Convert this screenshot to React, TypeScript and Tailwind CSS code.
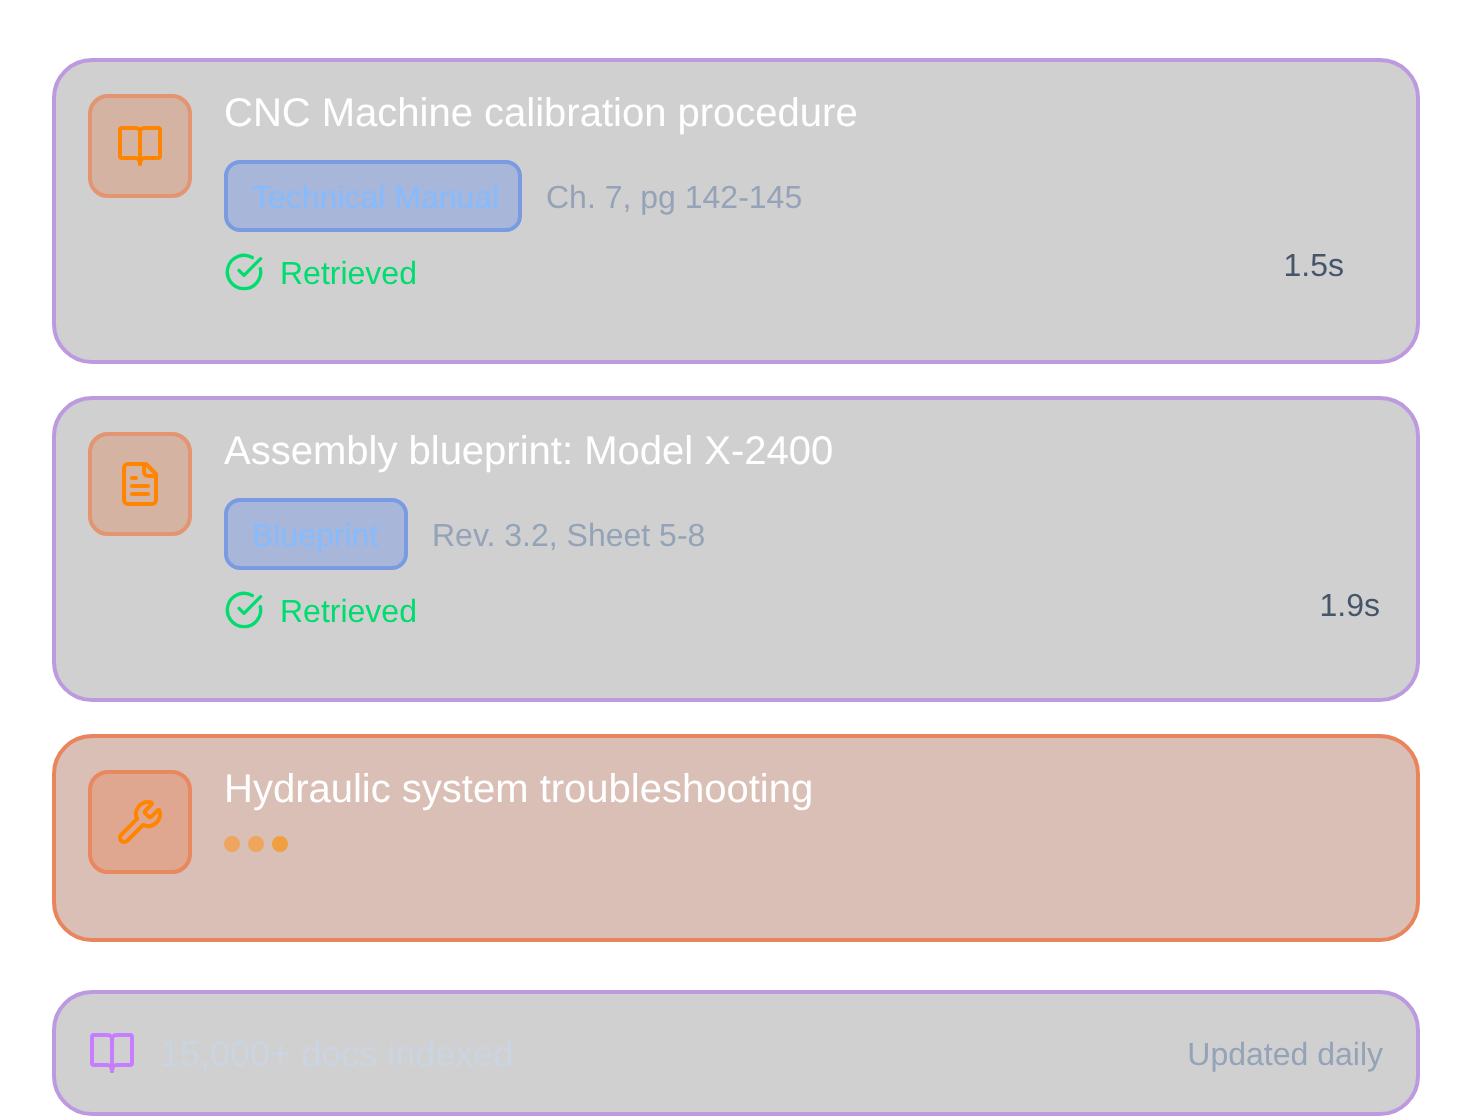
import { CircleCheckBig, Wrench } from "lucide-react";
import type { ReactNode } from "react";

function Svg({ children, className }: { children: ReactNode; className?: string }) {
  return (
    <svg width="48" height="48" viewBox="0 0 24 24" fill="none" stroke="currentColor" strokeWidth="2" strokeLinecap="round" strokeLinejoin="round" className={className}>
      {children}
    </svg>
  );
}

const Book = ({ className }: { className?: string }) => (
  <Svg className={className}>
    <path d="M12 5v16" />
    <path d="M3 18h7a2 3 0 0 1 2 3 2 3 0 0 1 2-3h7a1 1 0 0 0 1-1V4a1 1 0 0 0-1-1h-7a2 2 0 0 0-2 2 2 2 0 0 0-2-2H3a1 1 0 0 0-1 1v13a1 1 0 0 0 1 1z" />
  </Svg>
);

const File = () => (
  <Svg>
    <path d="M15 2H6a2 2 0 0 0-2 2v16a2 2 0 0 0 2 2h12a2 2 0 0 0 2-2V7Z" />
    <path d="M14 2v4a2 2 0 0 0 2 2h4" />
    <path d="M10 9H8" />
    <path d="M16 13H8" />
    <path d="M16 17H8" />
  </Svg>
);

function Retrieved() {
  return (
    <div className="flex h-12 items-center gap-4 text-[32px] text-[#00dc6e]">
      <CircleCheckBig size={40} strokeWidth={2} />
      <span className="pt-[2px] leading-[46px]">Retrieved</span>
    </div>
  );
}

function DocCard({ icon, title, chip, chipClass, sub, time, timeClass }: { icon: ReactNode; title: string; chip: string; chipClass: string; sub: string; time: string; timeClass: string }) {
  return (
    <div className="flex gap-8 rounded-[40px] border-4 border-[#bd9adf] bg-[#d0d0d0] pt-8 pb-16 px-8 will-change-transform">
      <div className="flex h-[104px] w-[104px] shrink-0 items-center justify-center rounded-[20px] border-4 border-[#e39572] bg-[#d5b3a3] text-[#ff8500]">
        {icon}
      </div>
      <div className="min-w-0 flex-1">
        <div className="mb-[28px] text-[40px] leading-[38px] text-white">{title}</div>
        <div className="flex items-center gap-6">
          <span className={`rounded-[16px] border-4 border-[#7a9ae2] bg-[#a7b6d9] pl-6 pt-[9px] pb-[7px] whitespace-nowrap text-[32px] leading-[48px] text-[#85bbff] ${chipClass}`}>{chip}</span>
          <span className="pt-[2px] text-[32px] leading-[46px] text-[#94a3b8]">{sub}</span>
        </div>
        <div className="mt-4 flex items-start justify-between">
          <Retrieved />
          <span className={`text-[32px] leading-[48px] text-[#475569] ${timeClass}`}>{time}</span>
        </div>
      </div>
    </div>
  );
}

export default function App() {
  return (
    <div className="flex min-h-[1120px] flex-col bg-white px-[52px] pt-[58px] font-['Liberation_Sans',Arial,sans-serif] [text-rendering:geometricPrecision]">
      <div className="flex flex-col gap-8">
        <DocCard icon={<Book />} title="CNC Machine calibration procedure" chip="Technical Manual" chipClass="w-[298px]" sub="Ch. 7, pg 142-145" time="1.5s" timeClass="mr-10 -mt-[7px]" />
        <DocCard icon={<File />} title="Assembly blueprint: Model X-2400" chip="Blueprint" chipClass="w-[184px]" sub="Rev. 3.2, Sheet 5-8" time="1.9s" timeClass="mr-1 -mt-[5px]" />
        <div className="flex gap-8 rounded-[40px] border-4 border-[#e8855d] bg-[#d9bfb5] pt-8 pb-16 px-8 will-change-transform">
          <div className="flex h-[104px] w-[104px] shrink-0 items-center justify-center rounded-[20px] border-4 border-[#e8885f] bg-[#dfa690] text-[#ff8500]">
            <Wrench size={48} />
          </div>
          <div className="min-w-0 flex-1">
            <div className="mb-[28px] text-[40px] leading-[38px] text-white">Hydraulic system troubleshooting</div>
            <div className="flex gap-2">
              <span className="h-4 w-4 rounded-full bg-[#eda55f]" />
              <span className="h-4 w-4 rounded-full bg-[#eea65d]" />
              <span className="h-4 w-4 rounded-full bg-[#f0a040]" />
            </div>
          </div>
        </div>
      </div>
      <div className="mt-12 flex items-center justify-between rounded-[40px] border-4 border-[#bd9adf] bg-[#d0d0d0] pl-8 pr-[33px] py-[35px] will-change-transform">
        <div className="flex items-center gap-6">
          <Book className="text-[#c77dff]" />
          <span className="pt-[2px] text-[36px] leading-[46px] text-[#cbd5e1]">15,000+ docs indexed</span>
        </div>
        <span className="pt-[2px] text-[32px] leading-[46px] text-[#94a3b8]">Updated daily</span>
      </div>
    </div>
  );
}
